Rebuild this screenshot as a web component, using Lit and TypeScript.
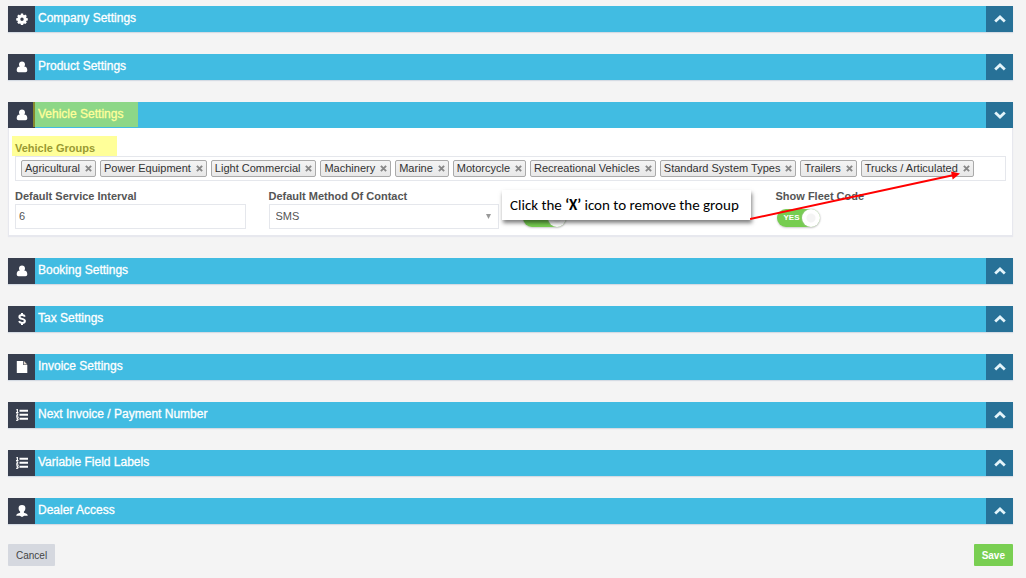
import { LitElement, html, svg, css, nothing } from "lit";
import { customElement, property } from "lit/decorators.js";

const icons: Record<string, unknown> = {
  gear: svg`<path fill-rule="evenodd" d="M4.900.500h2.200l.3 1.400.7.300 1.200-.7 1.500 1.500-.7 1.200.3.700 1.400.3v2.200l-1.400.3-.3.700.7 1.200-1.500 1.500-1.200-.7-.7.300-.3 1.400H4.900l-.3-1.400-.7-.3-1.200.7L1.200 9.600l.7-1.200-.3-.7L.2 7.400V5.200l1.400-.3.300-.7L1.200 3l1.500-1.500 1.200.7.7-.3zM6 4.500a1.700 1.700 0 1 0 0 3.400 1.700 1.700 0 0 0 0-3.400z"/>`,
  user: svg`<path d="M6 .4c1.800 0 3 1.300 3 3 0 1-.3 1.700-.9 2.200 2.200.1 3.200 1.500 3.200 3.700 0 1.300-.7 1.900-1.800 1.900h-7C1.400 11.200.7 10.600.7 9.300c0-2.200 1-3.600 3.200-3.700C3.300 5.100 3 4.400 3 3.400c0-1.700 1.200-3 3-3z"/>`,
  dollar: svg`<path fill="none" stroke="#fff" stroke-width="2" d="M8.900 3.600C8.400 2.600 7.300 2.100 6 2.100c-1.600 0-2.600.7-2.600 1.800C3.400 6.700 8.900 5 8.900 8c0 1.200-1.200 1.900-2.800 1.900-1.600 0-2.600-.6-3.100-1.700M6 0v2.200M6 9.800V12"/>`,
  file: svg`<path d="M.8 0h6.400v4.100h4.100V12H.8z"/><path fill="#e9dfd2" d="M7.900 0l3.400 3.400H7.900z"/>`,
  list: svg`<path d="M3.500.8H12v2H3.500zM3.500 4.800H12v2H3.500zM3.500 8.800H12v2H3.500z"/><path fill="none" stroke="#fff" stroke-width="1.100" d="M.4 1l1-.6v3M0 3.500h2.500M.3 5c1.800-.8 2.200.4.100 2.200h2M.2 8.700h1.900L1.300 9.900c1.500.2 1 1.800-1.100 1.500"/>`,
  agent: svg`<path d="M6 0c2.200 0 3.400 1.200 3.400 3 0 1.700-.7 2.900-1.500 3.500v1.200c2 .6 3.700 1 3.900 3H8.300L6 11.900l-2.300-1.200H.2c.2-2 1.900-2.400 3.900-3V6.500C3.300 5.900 2.600 4.700 2.600 3c0-1.800 1.200-3 3.400-3z"/>`,
};

@customElement("settings-panel")
class SettingsPanel extends LitElement {
  @property() label = "";
  @property() icon = "user";
  @property({ type: Boolean }) open = false;

  static styles = css`
    :host { display: block; position: relative; }
    .bar { display: flex; height: 26px; background: #41bce2; box-shadow: 0 1px 1px #d5dbe3; }
    .icon { width: 27px; display: grid; place-items: center; background: #373e4e; }
    .icon svg { fill: #fff; display: block; }
    h2 { flex: 1; margin: 0; padding-left: 3px; font-size: 12px; font-weight: 400; line-height: 25px; color: #fff; -webkit-text-stroke: 0.3px #fff; }
    button { width: 27px; padding: 0; border: 0; display: grid; place-items: center; background: #277197; cursor: pointer; }
    .body { background: #fff; border: 1px solid #e7e8ee; border-top: 0; padding: 12px 6px 6px; box-shadow: 0 1px 1px #e7e8ee; }
  `;

  render() {
    return html`
      <div class="bar">
        <span class="icon"><svg width="12" height="12" viewBox="0 0 12 12" aria-hidden="true">${icons[this.icon]}</svg></span>
        <h2>${this.label}</h2>
        <button aria-label="${this.label}" aria-expanded="${this.open}" @click=${() => (this.open = !this.open)}>
          <svg width="12" height="8" viewBox="0 0 12 8" fill="none" stroke="#e3f4fa" stroke-width="2.800" aria-hidden="true">
            <path d="${this.open ? "M1.200 1.500 6 6l4.800-4.500" : "M1.200 6.500 6 2l4.800 4.500"}" />
          </svg>
        </button>
      </div>
      ${this.open ? html`<div class="body"><slot></slot></div>` : nothing}
    `;
  }
}

const groups = [
  "Agricultural", "Power Equipment", "Light Commercial", "Machinery", "Marine", "Motorcycle",
  "Recreational Vehicles", "Standard System Types", "Trailers", "Trucks / Articulated",
];

@customElement("app-root")
class AppRoot extends LitElement {
  static styles = css`
    :host { display: block; box-sizing: border-box; min-height: 100vh; padding: 6px 13px 12px 8px; background: #f4f4f4; font-family: "Liberation Sans", Arial, sans-serif; color: #444; }
    * { box-sizing: border-box; }
    .panels { display: flex; flex-direction: column; gap: 22px; }
    .label { display: block; width: max-content; font-size: 11px; font-weight: 700; line-height: 16px; color: #555; }
    .chips { list-style: none; margin: 0 0 7px; padding: 3px 5px 2px; min-height: 25px; display: flex; flex-wrap: wrap; gap: 4px; border: 1px solid #e5e7ec; background: #fff; }
    .chip { display: flex; align-items: center; gap: 5px; height: 17px; padding: 0 3px; border: 1px solid #aaa; border-radius: 2px; background: linear-gradient(#f4f4f4, #e8e8e8); font-size: 11px; line-height: 15px; color: #333; white-space: nowrap; }
    .remove { width: 7px; height: 7px; padding: 0; border: 0; background: none; display: grid; cursor: pointer; }
    .fields { display: grid; grid-template-columns: repeat(4, minmax(0, 1fr)); gap: 23px; }
    .text, .select { display: block; width: 100%; height: 25px; border: 1px solid #e5e7ec; border-radius: 0; background: #fff; font: 11px "Liberation Sans", Arial, sans-serif; color: #555; }
    .text { padding: 0 3px 1px; }
    .select { appearance: none; padding: 0 6px 1px; }
    .picker { position: relative; }
    .caret { position: absolute; right: 8px; top: 10px; }
    .switch { display: block; position: relative; width: 43px; height: 18px; margin: 5px 0 0 1px; border-radius: 9px; background: #76cd50; box-shadow: 0 1px 2px #ccc; color: #fff; font-size: 8px; font-weight: 700; line-height: 18px; padding-left: 7px; }
    .switch input { position: absolute; inset: 0; margin: 0; opacity: 0; }
    .knob { position: absolute; right: 0; top: 0; width: 18px; height: 18px; border-radius: 50%; background: radial-gradient(circle, #f4f4f4 0 4px, #fff 5px); box-shadow: 0 0 2px #bbb; }
    .mark { position: absolute; background: rgba(255, 255, 0, 0.4); pointer-events: none; }
    .mark-title { left: 25px; top: 0; width: 105px; height: 25px; }
    .mark-groups { left: 4px; top: 34px; width: 105px; height: 20px; }
    .callout { position: absolute; left: 494px; top: 88px; width: 249px; height: 30px; padding-left: 8px; background: #fff; box-shadow: 1px 3px 4px rgba(0, 0, 0, 0.5); font: 15px/31px Carlito, Calibri, Lato, sans-serif; color: #000; white-space: nowrap; }
    .arrow { position: absolute; left: 742px; top: 66px; pointer-events: none; }
    .actions { display: flex; justify-content: space-between; margin-top: 20px; }
    .action { height: 22px; border: 0; border-radius: 1px; padding: 0 8px; font: 10px "Liberation Sans", Arial, sans-serif; cursor: pointer; }
    .cancel { background: #d5d8df; color: #444; }
    .save { background: #79cf52; color: #fff; font-weight: 700; }
  `;

  render() {
    return html`
      <main>
        <div class="panels">
          <settings-panel label="Company Settings" icon="gear"></settings-panel>
          <settings-panel label="Product Settings"></settings-panel>
          <settings-panel label="Vehicle Settings" open>
            <span class="label" id="groups">Vehicle Groups</span>
            <ul class="chips" aria-labelledby="groups">
              ${groups.map((g) => html`<li class="chip">${g}<button class="remove" aria-label="Remove ${g}"><svg width="7" height="7" viewBox="0 0 8 8" stroke="#888" stroke-width="2.200"><path d="M1 1l6 6M7 1L1 7" /></svg></button></li>`)}
            </ul>
            <div class="fields">
              <div>
                <label class="label" for="interval">Default Service Interval</label>
                <input class="text" id="interval" value="6" />
              </div>
              <div>
                <label class="label" for="contact">Default Method Of Contact</label>
                <div class="picker">
                  <select class="select" id="contact"><option>SMS</option></select>
                  <svg class="caret" width="5" height="5" viewBox="0 0 5 5" fill="#999"><path d="M0 0h5L2.500 5z" /></svg>
                </div>
              </div>
              <div>
                <span class="label">&nbsp;</span>
                <label class="switch"><input type="checkbox" checked />YES<span class="knob"></span></label>
              </div>
              <div>
                <label class="label" for="fleet">Show Fleet Code</label>
                <label class="switch"><input type="checkbox" id="fleet" checked />YES<span class="knob"></span></label>
              </div>
            </div>
            <span class="mark mark-title"></span>
            <span class="mark mark-groups"></span>
            <div class="callout" role="note">Click the <b>‘X’</b> icon to remove the group</div>
            <svg class="arrow" width="216" height="54" viewBox="0 0 216 54" aria-hidden="true">
              <path d="M0 51L204 7" stroke="#f00" stroke-width="2" />
              <path d="M210 5.500L201 3.500l1.700 8z" fill="#f00" />
            </svg>
          </settings-panel>
          <settings-panel label="Booking Settings"></settings-panel>
          <settings-panel label="Tax Settings" icon="dollar"></settings-panel>
          <settings-panel label="Invoice Settings" icon="file"></settings-panel>
          <settings-panel label="Next Invoice / Payment Number" icon="list"></settings-panel>
          <settings-panel label="Variable Field Labels" icon="list"></settings-panel>
          <settings-panel label="Dealer Access" icon="agent"></settings-panel>
        </div>
        <div class="actions">
          <button class="action cancel">Cancel</button>
          <button class="action save">Save</button>
        </div>
      </main>
    `;
  }
}
